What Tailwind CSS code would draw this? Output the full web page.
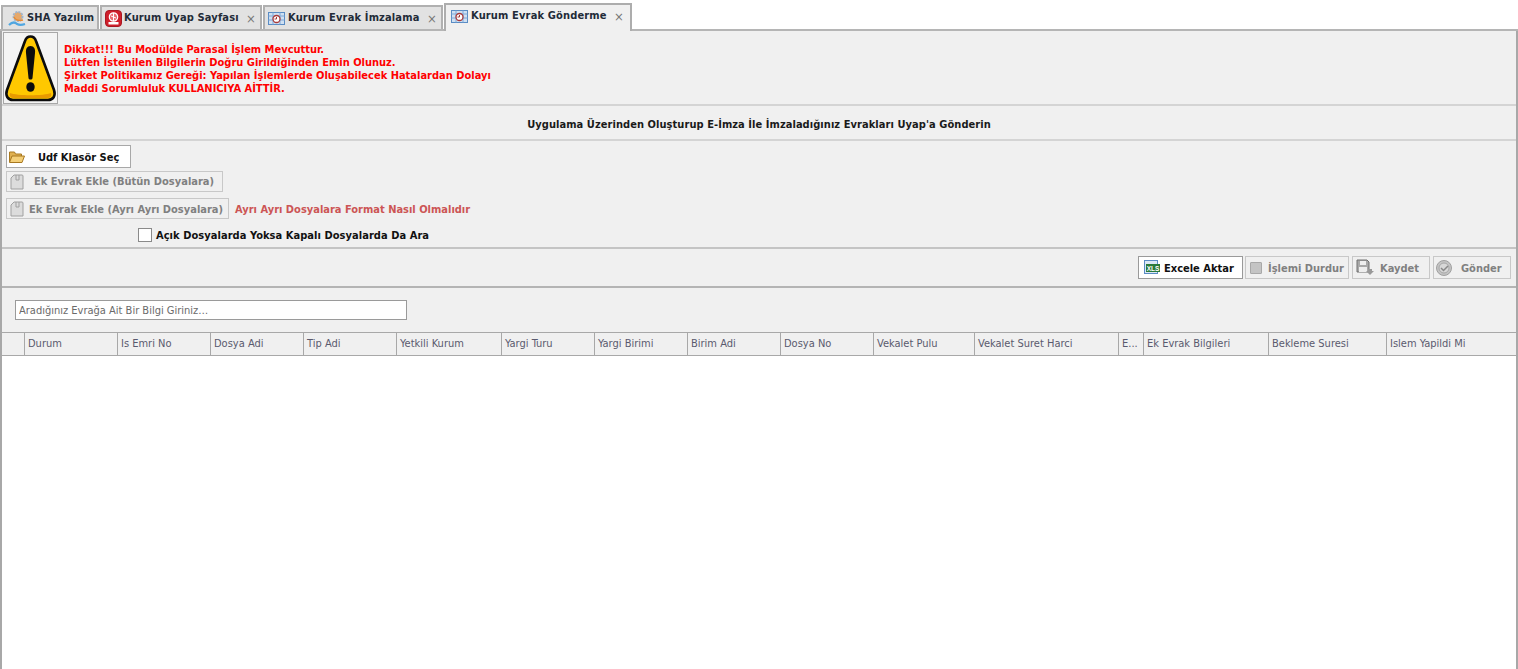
<!DOCTYPE html>
<html lang="tr">
  <head>
    <meta charset="UTF-8" />
    <title>Kurum Evrak Gönderme</title>
    <script src="https://cdn.jsdelivr.net/npm/@tailwindcss/browser@4"></script>
  </head>
  <body class="h-[669px] w-[1518px] overflow-hidden bg-white font-['DejaVu_Sans_Condensed','Noto_Sans',sans-serif] text-[11px]">
    <!-- tab strip -->
    <div class="flex h-[31px] items-end gap-px border-b-2 border-[#b5b5b5] bg-white pl-[1px] tracking-[0.15px]">
      <div class="flex h-[24px] w-[98px] items-center gap-[1px] border-2 border-b-0 border-[#b0b0b0] bg-[#e2e2e2] pt-[1px] pl-[5px] font-bold text-[#222b38]">
        <svg width="18" height="18" viewBox="0 0 18 18">
          <circle cx="10" cy="6.5" r="4.5" fill="#e8a868" stroke="#9fb4cc" stroke-width="2" stroke-dasharray="2 1" />
          <path d="M6 7c1 3 5 4 9 3" stroke="#e88a30" stroke-width="1.5" fill="none" />
          <path d="M1 15c3-3 6-3 8-1 2 1 5 1 8 0" stroke="#4fa6e0" stroke-width="2.2" fill="none" />
        </svg>
        <span>SHA Yazılım</span>
      </div>
      <div class="flex h-[24px] w-[162px] items-center gap-[2px] border-2 border-b-0 border-[#b0b0b0] bg-[#e2e2e2] pt-[1px] pl-[3px] font-bold text-[#222b38]">
        <svg width="17" height="17" viewBox="0 0 17 17">
          <rect x="0.5" y="0.5" width="16" height="16" rx="3.5" fill="#cf1f2b" stroke="#a81822" />
          <circle cx="8.5" cy="7" r="4.2" fill="#e86a70" stroke="#fff" stroke-width="1.2" />
          <path d="M8.5 3v8M6 6l5 2" stroke="#fff" />
          <rect x="3.5" y="12" width="10" height="2.5" fill="#fff" />
        </svg>
        <span>Kurum Uyap Sayfası</span>
        <span class="ml-auto mr-[4px] text-[13px] font-normal leading-none text-[#777]">×</span>
      </div>
      <div class="flex h-[24px] w-[180px] items-center gap-[3px] border-2 border-b-0 border-[#b0b0b0] bg-[#e2e2e2] pt-[1px] pl-[3px] font-bold text-[#222b38]">
        <svg width="17" height="15" viewBox="0 0 17 15">
          <rect x="0.5" y="1.5" width="16" height="12" fill="#cfe0f2" stroke="#5a8cc4" />
          <path d="M0.5 5h16M0.5 9h16M5 1.5v12M12 1.5v12" stroke="#7ea8d8" />
          <circle cx="8.5" cy="8" r="3.5" fill="#fff" stroke="#a83a3a" stroke-width="1.3" />
          <path d="M8.5 6v2h-2" stroke="#a83a3a" fill="none" />
        </svg>
        <span>Kurum Evrak İmzalama</span>
        <span class="ml-auto mr-[4px] text-[13px] font-normal leading-none text-[#777]">×</span>
      </div>
      <div class="relative -mb-[2px] flex h-[28px] w-[188px] items-center gap-[3px] border-2 border-b-0 border-[#adadad] bg-[#f0f0f0] pb-[3px] pl-[5px] font-bold text-[#222b38]">
        <svg width="17" height="15" viewBox="0 0 17 15">
          <rect x="0.5" y="1.5" width="16" height="12" fill="#cfe0f2" stroke="#5a8cc4" />
          <path d="M0.5 5h16M0.5 9h16M5 1.5v12M12 1.5v12" stroke="#7ea8d8" />
          <circle cx="8.5" cy="8" r="3.5" fill="#fff" stroke="#a83a3a" stroke-width="1.3" />
          <path d="M8.5 6v2h-2" stroke="#a83a3a" fill="none" />
        </svg>
        <span>Kurum Evrak Gönderme</span>
        <span class="ml-auto mr-[6px] text-[13px] font-normal leading-none text-[#777]">×</span>
      </div>
    </div>

    <!-- panel -->
    <div class="flex h-[638px] flex-col border-x-2 border-[#a8a8a8] bg-[#f0f0f0]">
      <!-- warning -->
      <div class="flex h-[75px] items-center gap-[6px] border-b-2 border-[#d4d4d4] pl-[1px]">
        <div class="flex h-[72px] w-[55px] items-center justify-center border border-[#a8a8a8] bg-[#f4f4f4]">
          <svg width="53" height="70" viewBox="0 0 53 70">
            <path d="M26.5 3.5 C29 3.5 31 5 32 8 L50 57 C52 63 49 67 44 67 L9 67 C4 67 1 63 3 57 L21 8 C22 5 24 3.5 26.5 3.5 Z" fill="#ffc800" stroke="#0c0c0c" stroke-width="2.6" />
            <path d="M6 60 C5 64 7 65 10 65 L43 65 C46 65 48 64 47 60 C40 63 13 63 6 60 Z" fill="#e89a00" />
            <path d="M26.5 13 C30 13 31.5 16 31 20 L28.5 45 C28.3 47 24.7 47 24.5 45 L22 20 C21.5 16 23 13 26.5 13 Z" fill="#0c0c0c" />
            <ellipse cx="26.5" cy="54" rx="4.2" ry="4.8" fill="#0c0c0c" />
          </svg>
        </div>
        <div class="pt-[2px] text-[11px] font-bold leading-[13px] text-[#ff0000]">
          <div>Dikkat!!! Bu Modülde Parasal İşlem Mevcuttur.</div>
          <div>Lütfen İstenilen Bilgilerin Doğru Girildiğinden Emin Olunuz.</div>
          <div>Şirket Politikamız Gereği: Yapılan İşlemlerde Oluşabilecek Hatalardan Dolayı</div>
          <div>Maddi Sorumluluk KULLANICIYA AİTTİR.</div>
        </div>
      </div>

      <!-- title -->
      <div class="flex h-[35px] items-center justify-center border-b-2 border-[#d4d4d4] pt-[5px] font-bold tracking-[0.06px] text-[#1a1a1a]">
        Uygulama Üzerinden Oluşturup E-İmza İle İmzaladığınız Evrakları Uyap'a Gönderin
      </div>

      <!-- file buttons -->
      <div class="flex h-[108px] flex-col border-b-2 border-[#c4c4c4] pl-[4px] pt-[4px] font-bold">
        <button class="flex h-[23px] w-[125px] items-center border border-[#a8a8a8] bg-white pl-[2px] font-bold text-[#111]">
          <svg width="16" height="14" viewBox="0 0 16 14"><path d="M0.5 12V2h5l1 2h6v2" fill="#e0b050" stroke="#a87820" /><path d="M0.5 12.5L3 6h12.5l-2.5 6.5Z" fill="#f4cf78" stroke="#a87820" /></svg>
          <span class="ml-[13px] pt-[4px]">Udf Klasör Seç</span>
        </button>
        <button class="mt-[3px] flex h-[21px] w-[217px] items-center border border-[#c8c8c8] pl-[3px] font-bold text-[#808080]">
          <svg width="14" height="16" viewBox="0 0 14 16"><path d="M1 15V4l3-3h8a1 1 0 0 1 1 1v13Z" fill="#dcdcdc" stroke="#a0a0a0" /><path d="M6 1v5h3V1" fill="none" stroke="#a0a0a0" /></svg>
          <span class="ml-[10px] pt-[2px]">Ek Evrak Ekle (Bütün Dosyalara)</span>
        </button>
        <div class="mt-[6px] flex h-[21px] items-center gap-[6px]">
          <button class="flex h-[21px] w-[223px] items-center border border-[#c8c8c8] pl-[3px] font-bold text-[#808080]">
            <svg width="14" height="16" viewBox="0 0 14 16"><path d="M1 15V4l3-3h8a1 1 0 0 1 1 1v13Z" fill="#dcdcdc" stroke="#a0a0a0" /><path d="M6 1v5h3V1" fill="none" stroke="#a0a0a0" /></svg>
            <span class="ml-[5px] pt-[4px]">Ek Evrak Ekle (Ayrı Ayrı Dosyalara)</span>
          </button>
          <span class="pt-[4px] text-[#cc5555]">Ayrı Ayrı Dosyalara Format Nasıl Olmalıdır</span>
        </div>
        <label class="mt-[9px] flex h-[14px] items-center pl-[132px] text-[#111]">
          <span class="h-[14px] w-[14px] border border-[#8a8a8a] bg-white"></span>
          <span class="ml-[4px] pt-[2px] tracking-[0.05px]">Açık Dosyalarda Yoksa Kapalı Dosyalarda Da Ara</span>
        </label>
      </div>

      <!-- toolbar -->
      <div class="flex h-[39px] items-center justify-end gap-[2px] border-b-2 border-[#b4b4b4] pr-[5px] font-bold">
        <button class="flex h-[23px] w-[105px] items-center border border-[#9a9a9a] bg-white pl-[5px] font-bold text-[#111]">
          <svg width="16" height="15" viewBox="0 0 16 15">
            <rect x="0.5" y="0.5" width="13" height="13" fill="#dbe8f6" stroke="#5a8cc4" />
            <rect x="2" y="4" width="14" height="8" fill="#2a7a3a" />
            <text x="9" y="10.5" text-anchor="middle" font-size="6.5" font-weight="700" fill="#fff" font-family="Liberation Sans">XLS</text>
          </svg>
          <span class="ml-[4px] pt-[4px]">Excele Aktar</span>
        </button>
        <button class="flex h-[23px] w-[104px] items-center border border-[#c8c8c8] pl-[4px] font-bold text-[#808080]">
          <span class="h-[12px] w-[12px] rounded-[1px] border border-[#a8a8a8] bg-[#c4c4c4]"></span>
          <span class="ml-[6px] pt-[4px]">İşlemi Durdur</span>
        </button>
        <button class="ml-[1px] flex h-[23px] w-[78px] items-center border border-[#c8c8c8] pl-[3px] font-bold text-[#808080]">
          <svg width="18" height="17" viewBox="0 0 18 17"><path d="M1 1h10l2 2v10H1Z" fill="#a8a8a8" stroke="#707070" /><rect x="4" y="2" width="6" height="4" fill="#eee" /><rect x="3" y="8" width="8" height="5" fill="#eee" /><path d="M12 10h4v2h2l-4 4-4-4h2Z" fill="#999" /></svg>
          <span class="ml-[6px] pt-[4px]">Kaydet</span>
        </button>
        <button class="ml-[1px] flex h-[23px] w-[78px] items-center border border-[#c8c8c8] pl-[2px] font-bold text-[#808080]">
          <svg width="16" height="16" viewBox="0 0 16 16"><circle cx="8" cy="8" r="7.5" fill="#c4c4c4" stroke="#a0a0a0" /><circle cx="8" cy="8" r="5" fill="#d8d8d8" stroke="#a8a8a8" /><path d="M5 8l2.5 2.5L12 6" fill="none" stroke="#888" stroke-width="1.5" /></svg>
          <span class="ml-[9px] pt-[4px]">Gönder</span>
        </button>
      </div>

      <!-- search -->
      <div class="flex h-[44px] items-start pl-[13px] pt-[12px]">
        <input class="h-[20px] w-[392px] border border-[#9a9a9a] bg-white px-[3px] text-[11px] text-[#555] placeholder:text-[#6a6a6a]" placeholder="Aradığınız Evrağa Ait Bir Bilgi Giriniz…" />
      </div>

      <!-- table header -->
      <div class="grid h-[24px] grid-cols-[23px_93px_93px_93px_93px_105px_93px_93px_93px_93px_101px_144px_25px_125px_118px_1fr] border-y border-[#a8a8a8] text-[#5a5a6e]">
        <div class="border-r border-[#a8a8a8]"></div>
        <div class="flex items-center border-r border-[#a8a8a8] pl-[3px]">Durum</div>
        <div class="flex items-center border-r border-[#a8a8a8] pl-[3px]">Is Emri No</div>
        <div class="flex items-center border-r border-[#a8a8a8] pl-[3px]">Dosya Adi</div>
        <div class="flex items-center border-r border-[#a8a8a8] pl-[3px]">Tip Adi</div>
        <div class="flex items-center border-r border-[#a8a8a8] pl-[3px]">Yetkili Kurum</div>
        <div class="flex items-center border-r border-[#a8a8a8] pl-[3px]">Yargi Turu</div>
        <div class="flex items-center border-r border-[#a8a8a8] pl-[3px]">Yargi Birimi</div>
        <div class="flex items-center border-r border-[#a8a8a8] pl-[3px]">Birim Adi</div>
        <div class="flex items-center border-r border-[#a8a8a8] pl-[3px]">Dosya No</div>
        <div class="flex items-center border-r border-[#a8a8a8] pl-[3px]">Vekalet Pulu</div>
        <div class="flex items-center border-r border-[#a8a8a8] pl-[3px]">Vekalet Suret Harci</div>
        <div class="flex items-center border-r border-[#a8a8a8] pl-[3px]">E...</div>
        <div class="flex items-center border-r border-[#a8a8a8] pl-[3px]">Ek Evrak Bilgileri</div>
        <div class="flex items-center border-r border-[#a8a8a8] pl-[3px]">Bekleme Suresi</div>
        <div class="flex items-center pl-[3px]">Islem Yapildi Mi</div>
      </div>

      <div class="flex-1 bg-white"></div>
    </div>
  </body>
</html>
